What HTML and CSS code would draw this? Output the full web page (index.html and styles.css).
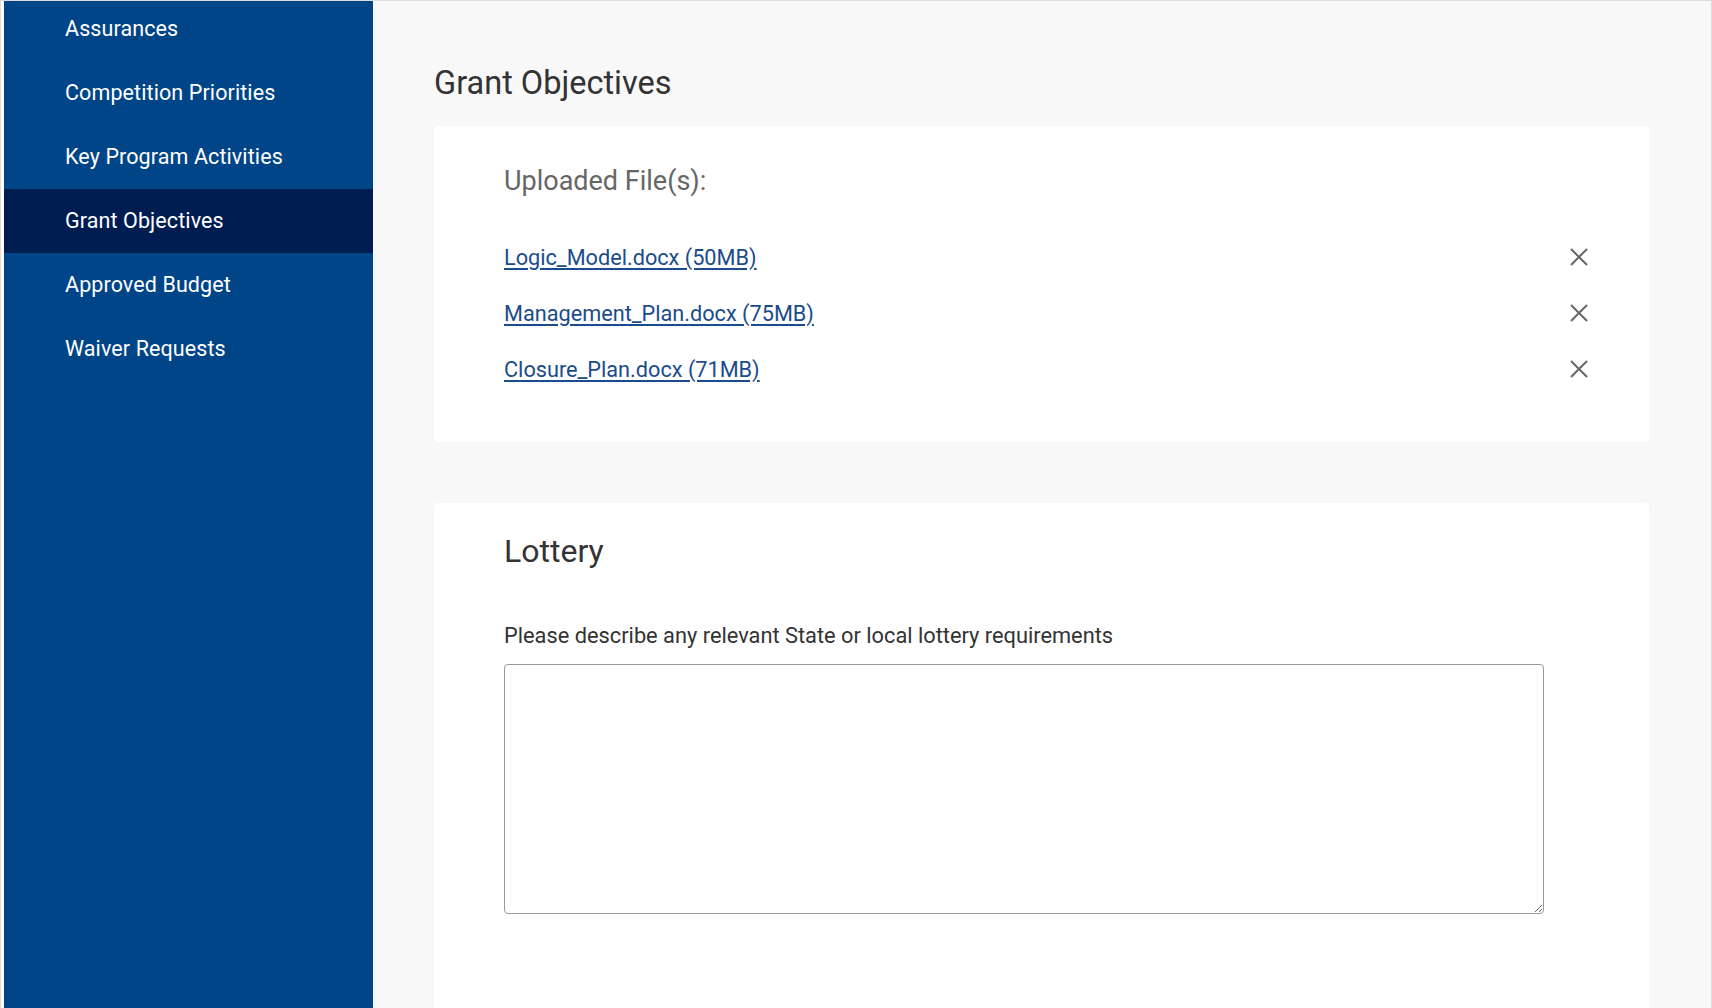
FILE: index.html
```html
<!DOCTYPE html>
<html lang="en">
<head>
  <meta charset="UTF-8">
  <meta name="viewport" content="width=device-width, initial-scale=1.0">
  <title>Grant Objectives</title>
  <link rel="stylesheet" href="styles.css">
</head>
<body>
  <div class="frame">
    <!-- Side navigation -->
    <nav class="sidebar">
      <ul class="nav-list">
        <li class="nav-item">Assurances</li>
        <li class="nav-item">Competition Priorities</li>
        <li class="nav-item">Key Program Activities</li>
        <li class="nav-item active">Grant Objectives</li>
        <li class="nav-item">Approved Budget</li>
        <li class="nav-item">Waiver Requests</li>
      </ul>
    </nav>

    <main class="content">
      <h1 class="page-title">Grant Objectives</h1>

      <!-- Uploaded files -->
      <section class="card files-card">
        <h2 class="files-title">Uploaded File(s):</h2>
        <ul class="file-list">
          <li class="file-row">
            <a href="#" class="file-link">Logic_Model.docx (50MB)</a>
            <button class="remove-btn" aria-label="Remove file">
              <svg width="18" height="18" viewBox="0 0 18 18"><path d="M1 1 L17 17 M17 1 L1 17" stroke="currentColor" stroke-width="2" fill="none"/></svg>
            </button>
          </li>
          <li class="file-row">
            <a href="#" class="file-link">Management_Plan.docx (75MB)</a>
            <button class="remove-btn" aria-label="Remove file">
              <svg width="18" height="18" viewBox="0 0 18 18"><path d="M1 1 L17 17 M17 1 L1 17" stroke="currentColor" stroke-width="2" fill="none"/></svg>
            </button>
          </li>
          <li class="file-row">
            <a href="#" class="file-link">Closure_Plan.docx (71MB)</a>
            <button class="remove-btn" aria-label="Remove file">
              <svg width="18" height="18" viewBox="0 0 18 18"><path d="M1 1 L17 17 M17 1 L1 17" stroke="currentColor" stroke-width="2" fill="none"/></svg>
            </button>
          </li>
        </ul>
      </section>

      <!-- Lottery question -->
      <section class="card lottery-card">
        <h2 class="section-title">Lottery</h2>
        <label class="field-label" for="lottery">Please describe any relevant State or local lottery requirements</label>
        <textarea id="lottery" class="field-text"></textarea>
      </section>
    </main>
  </div>
</body>
</html>
```

FILE: styles.css
```css
/* Basic styling */
* {
  box-sizing: border-box;
}

body {
  margin: 0;
  font-family: 'Roboto', 'Liberation Sans', sans-serif;
  background: #fff;
  overflow: hidden;
}

.frame {
  display: flex;
  height: 100vh;
  border: 1px solid #dcdcdc;
  border-bottom: none;
  padding-left: 3px;
  background: #fff;
}

/* Sidebar */
.sidebar {
  width: 369px;
  flex-shrink: 0;
  background: #004587;
  overflow: hidden;
}

.nav-list {
  list-style: none;
  margin: -4px 0 0;
  padding: 0;
}

.nav-item {
  height: 64px;
  line-height: 64px;
  padding-left: 61px;
  font-size: 21.5px;
  letter-spacing: 0.1px;
  color: #fff;
}

.nav-item.active {
  background: #001d52;
}

/* Main content */
.content {
  flex: 1;
  background: #f8f8f8;
  padding: 62px 62px 0 61px;
  overflow: hidden;
}

.page-title {
  margin: 0 0 23px;
  font-size: 32.5px;
  line-height: 40px;
  font-weight: 400;
  color: #333;
}

.card {
  background: #fff;
  border-radius: 4px;
  padding: 0 61px 0 70px;
}

.files-card {
  padding-top: 37px;
  padding-bottom: 45px;
  margin-bottom: 61px;
}

.files-title {
  margin: 0 0 30px;
  font-size: 27px;
  line-height: 36px;
  font-weight: 400;
  color: #666;
}

.file-list {
  list-style: none;
  margin: 0;
  padding: 0;
}

.file-row {
  display: flex;
  align-items: center;
  justify-content: space-between;
  height: 56px;
}

.file-link {
  font-size: 21.7px;
  color: #1a4b8c;
  text-decoration: underline;
  text-underline-offset: 3px;
}

.remove-btn {
  display: flex;
  padding: 0;
  border: none;
  background: none;
  color: #666;
  cursor: pointer;
}

.lottery-card {
  padding-top: 28px;
  padding-bottom: 120px;
}

.section-title {
  margin: 0 0 51px;
  font-size: 32px;
  line-height: 40px;
  font-weight: 400;
  color: #333;
}

.field-label {
  display: block;
  font-size: 21.8px;
  line-height: 28px;
  color: #333;
  margin-bottom: 14px;
}

.field-text {
  display: block;
  width: 1040px;
  height: 250px;
  border: 1px solid #999;
  border-radius: 4px;
  font-family: inherit;
  font-size: 22px;
}
```
